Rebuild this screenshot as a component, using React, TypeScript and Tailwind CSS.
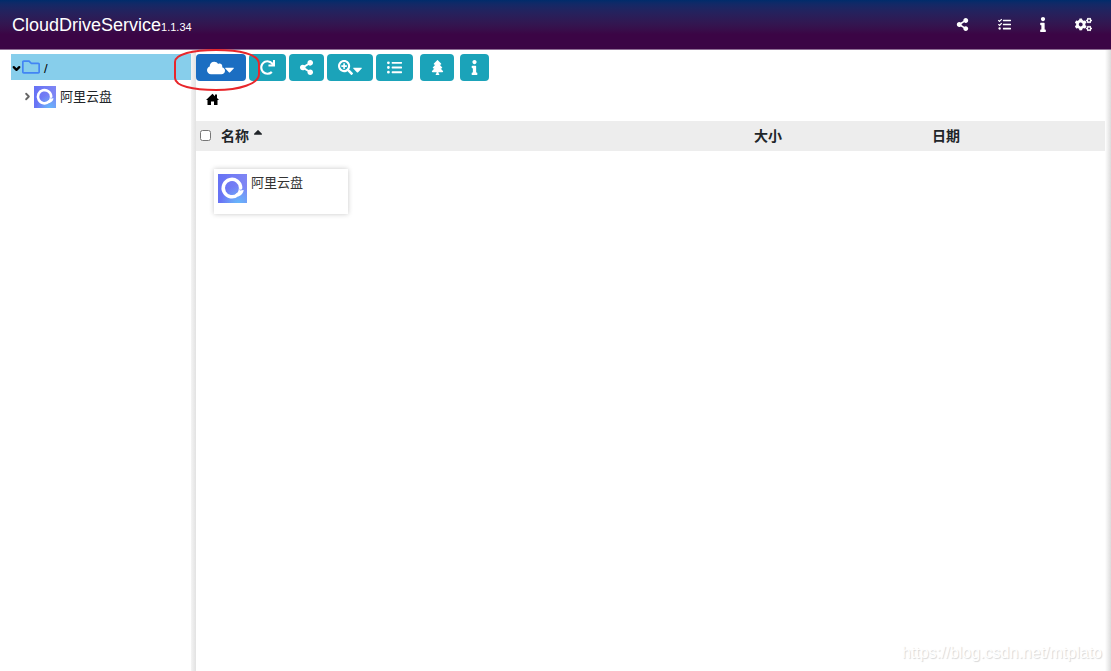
import { useState } from 'react'
import type { ReactNode } from 'react'
import {
    FaCaretDown,
    FaCaretUp,
    FaCloud,
    FaCogs,
    FaInfo,
    FaListUl,
    FaRedo,
    FaRegFolder,
    FaSearchPlus,
    FaShareAlt,
    FaTasks,
    FaTree,
} from 'react-icons/fa'
import { FiChevronDown, FiChevronRight } from 'react-icons/fi'

const DriveLogo = ({ id, className }: { id: string; className: string }) => (
    <svg viewBox="0 0 30 30" className={className} aria-hidden="true">
        <defs>
            <linearGradient id={id} x1="0" y1="0" x2="1" y2="0">
                <stop offset="0" stopColor="#6672f5" />
                <stop offset="1" stopColor="#7f86f4" />
            </linearGradient>
            <radialGradient id={`${id}Glow`} cx="0.7" cy="1" r="0.6">
                <stop offset="0" stopColor="#66b8fb" />
                <stop offset="1" stopColor="#66b8fb" stopOpacity="0" />
            </radialGradient>
        </defs>
        <rect width="30" height="30" fill={`url(#${id})`} />
        <rect width="30" height="30" fill={`url(#${id}Glow)`} />
        <path
            d="M23.4 14.5A9 9 0 1 0 20.5 21.2"
            fill="none"
            stroke="#fff"
            strokeWidth="3.6"
            strokeLinecap="round"
        />
        <path d="M21.6 14.5L22.8 17L26.6 16.6Q26 21.4 20.8 23.3L18.6 20.6Q21 19 21.2 17Z" fill="#fff" />
    </svg>
)

const HomeIcon = () => (
    <svg viewBox="0 0 13 13" className="size-[13px]" fill="currentColor" aria-hidden="true">
        <path d="M6.5 0.8L9 3.2V1.5H11V5.1L13 7H11.5V12H8V8.4H5V12H1.5V7H0Z" />
    </svg>
)

const ToolButton = ({
    label,
    className,
    children,
}: {
    label: string
    className: string
    children: ReactNode
}) => (
    <button
        type="button"
        aria-label={label}
        className={`flex h-[27px] items-center justify-center rounded text-white ${className}`}
    >
        {children}
    </button>
)

const Header = () => (
    <header className="flex h-[50px] items-center justify-between border-b border-[#8d6f94] bg-linear-to-b from-[#002c6b] to-[#3b0545] to-70% pr-[19px] pl-3 text-white">
        <h1 className="text-lg">
            CloudDriveService<span className="text-[11px]">1.1.34</span>
        </h1>
        <nav className="flex items-center gap-7">
            <button type="button" aria-label="Share" className="flex w-3.5 justify-center">
                <FaShareAlt size={13} />
            </button>
            <button type="button" aria-label="Tasks" className="flex w-3.5 justify-center">
                <FaTasks size={13} />
            </button>
            <button type="button" aria-label="About" className="flex w-2 justify-center">
                <FaInfo size={15} />
            </button>
            <button type="button" aria-label="Settings" className="flex w-[17px] justify-center">
                <FaCogs size={17} />
            </button>
        </nav>
    </header>
)

const Sidebar = () => (
    <aside className="w-[191px] shrink-0 pt-1 pl-[11px] text-[13px]">
        <ul>
            <li>
                <button
                    type="button"
                    className="flex h-[26px] w-full items-center bg-[#87ceeb] text-black"
                >
                    <FiChevronDown size={11} strokeWidth={5} className="mt-0.5" />
                    <FaRegFolder size={18} className="mr-1 text-[#4285f4]" />
                    <span className="mt-1">/</span>
                </button>
                <ul>
                    <li>
                        <button type="button" className="flex h-[33px] items-center pl-[11px]">
                            <FiChevronRight size={11} strokeWidth={4} className="mr-px text-[#666]" />
                            <DriveLogo id="treeLogo" className="mr-1 size-[22px]" />
                            阿里云盘
                        </button>
                    </li>
                </ul>
            </li>
        </ul>
    </aside>
)

const Toolbar = () => (
    <div className="flex gap-[3px] pt-1">
        <div className="relative">
            <ToolButton label="Cloud" className="w-[50px] bg-[#1b6ec2]">
                <FaCloud size={18} />
                <FaCaretDown size={15} className="mt-1 -mr-0.5 -ml-[3px]" />
            </ToolButton>
            <svg
                viewBox="0 0 88 44"
                className="pointer-events-none absolute -top-1.5 -left-[23px] h-11 w-[88px] max-w-none"
                fill="none"
                stroke="#e8262b"
                strokeWidth="2"
                aria-hidden="true"
            >
                <path d="M2 14C2 6 20 2 43 2S86 6 86 16V26C86 36 66 42 43 42S2 38 2 30Z" />
            </svg>
        </div>
        <ToolButton label="Refresh" className="w-[37px] bg-[#1ba3b9]">
            <FaRedo size={15} />
        </ToolButton>
        <ToolButton label="Share" className="w-[35px] bg-[#1ba3b9]">
            <FaShareAlt size={15} />
        </ToolButton>
        <ToolButton label="Zoom" className="w-[46px] bg-[#1ba3b9]">
            <FaSearchPlus size={15} />
            <FaCaretDown size={15} className="mt-1 -mr-0.5 -ml-[3px]" />
        </ToolButton>
        <ToolButton label="List" className="mr-1 w-[37px] bg-[#1ba3b9]">
            <FaListUl size={15} />
        </ToolButton>
        <ToolButton label="Tree" className="mr-[3px] w-[34px] bg-[#1ba3b9]">
            <FaTree size={15} />
        </ToolButton>
        <ToolButton label="Info" className="w-[29px] bg-[#1ba3b9]">
            <FaInfo size={15} />
        </ToolButton>
    </div>
)

const FileList = () => {
    const [checked, setChecked] = useState(false)

    return (
        <>
            <table className="w-full table-fixed bg-[#ededed] text-left text-sm text-[#212529]">
                <thead>
                    <tr className="h-[30px]">
                        <th className="w-[25px] pl-1">
                            <input
                                type="checkbox"
                                aria-label="Select all"
                                checked={checked}
                                onChange={(e) => setChecked(e.target.checked)}
                                className="mb-0.5 block size-[11px]"
                            />
                        </th>
                        <th>
                            <button type="button" className="flex items-center gap-1 font-bold">
                                名称
                                <FaCaretUp size={14} className="-mt-2 -ml-0.5" />
                            </button>
                        </th>
                        <th className="w-[178px] pl-px">大小</th>
                        <th className="w-[174px] pl-px">日期</th>
                    </tr>
                </thead>
            </table>
            <ul className="flex flex-wrap gap-4 px-[18px] pt-[18px]">
                <li>
                    <button
                        type="button"
                        className="flex h-[45px] w-[134px] items-start bg-white p-1 text-[13px] text-[#333] shadow-[0_0_5px_rgba(0,0,0,0.22)]"
                    >
                        <DriveLogo id="cardLogo" className="mt-px mr-1 size-[29px]" />
                        阿里云盘
                    </button>
                </li>
            </ul>
        </>
    )
}

const App = () => {
    return (
        <div className="flex min-h-screen flex-col bg-white font-['Liberation_Sans','Noto_Sans_CJK_SC',sans-serif] text-[#212529]">
            <Header />
            <div className="flex flex-1">
                <Sidebar />
                <div className="w-[5px] shrink-0 bg-linear-to-r from-[#f4f4f4] to-[#e2e2e2]" />
                <main className="flex min-w-0 flex-1 flex-col">
                    <Toolbar />
                    <nav className="flex h-10 items-start px-2.5 pt-3">
                        <a href="#" aria-label="Home" className="text-black">
                            <HomeIcon />
                        </a>
                    </nav>
                    <FileList />
                    <footer className="mt-auto pr-[3px] pb-1.5 text-right text-base text-white [text-shadow:1px_1px_1px_rgba(0,0,0,0.16)]">
                        https://blog.csdn.net/mtplato
                    </footer>
                </main>
                <div className="w-1.5 shrink-0 bg-linear-to-r from-white to-[#dcdcdc]" />
            </div>
        </div>
    )
}

export default App
